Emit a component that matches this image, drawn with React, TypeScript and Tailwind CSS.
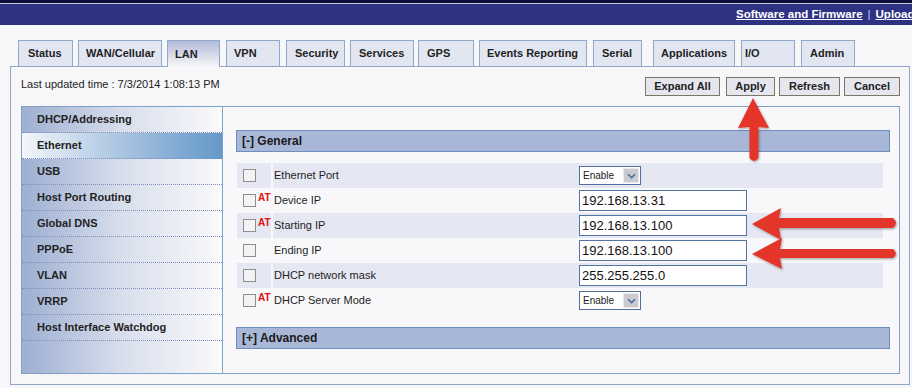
import React from 'react';

/* Router admin page: LAN > Ethernet settings */

const TABS = [
  { label: 'Status', cls: 'w-[55px] pl-[9px]' },
  { label: 'WAN/Cellular', cls: 'w-[84px] pl-[7px] ml-[5px]' },
  { label: 'LAN', cls: 'w-[53px] pl-[7px] ml-[5px]', active: true },
  { label: 'VPN', cls: 'w-[54px] pl-[7px] ml-[6px]' },
  { label: 'Security', cls: 'w-[59px] pl-[8px] ml-[6px]' },
  { label: 'Services', cls: 'w-[64px] pl-[8px] ml-[5px]' },
  { label: 'GPS', cls: 'w-[56px] pl-[8px] ml-[4px]' },
  { label: 'Events Reporting', cls: 'w-[108px] pl-[7px] ml-[5px]' },
  { label: 'Serial', cls: 'w-[49px] pl-[8px] ml-[6px]' },
  { label: 'Applications', cls: 'w-[82px] pl-[7px] ml-[11px]' },
  { label: 'I/O', cls: 'w-[54px] pl-[3px] ml-[6px]' },
  { label: 'Admin', cls: 'w-[54px] pl-[8px] ml-[6px]' },
];

const SIDE = [
  'DHCP/Addressing',
  'Ethernet',
  'USB',
  'Host Port Routing',
  'Global DNS',
  'PPPoE',
  'VLAN',
  'VRRP',
  'Host Interface Watchdog',
];

type Row = { label: string; at?: boolean; kind: 'select' | 'input'; value: string };

const ROWS: Row[] = [
  { label: 'Ethernet Port', kind: 'select', value: 'Enable' },
  { label: 'Device IP', at: true, kind: 'input', value: '192.168.13.31' },
  { label: 'Starting IP', at: true, kind: 'input', value: '192.168.13.100' },
  { label: 'Ending IP', kind: 'input', value: '192.168.13.100' },
  { label: 'DHCP network mask', kind: 'input', value: '255.255.255.0' },
  { label: 'DHCP Server Mode', at: true, kind: 'select', value: 'Enable' },
];

const BUTTONS = [
  { label: 'Expand All', cls: 'w-[75px]' },
  { label: 'Apply', cls: 'w-[49px] ml-[6px]' },
  { label: 'Refresh', cls: 'w-[61px] ml-[4px]' },
  { label: 'Cancel', cls: 'w-[56px] ml-[4px]' },
];

const Select: React.FC<{ value: string }> = ({ value }) => (
  <div className="w-[62px] h-[19px] border border-[#4f6f9c] bg-white flex items-center">
    <span className="flex-1 pl-[3px] text-[10px] text-[#222] leading-none">{value}</span>
    <span className="w-[16px] h-[15px] mr-[1px] bg-[#cacbd1] border border-[#e9e9ee] flex items-center justify-center">
      <svg width="9" height="6" viewBox="0 0 9 6">
        <path d="M1 1.2 L4.5 4.6 L8 1.2" fill="none" stroke="#4b6c9c" strokeWidth="1.6" />
      </svg>
    </span>
  </div>
);

const SettingRow: React.FC<{ row: Row; shaded: boolean }> = ({ row, shaded }) => {
  const bg = shaded ? 'bg-[#e5e7f2]' : '';
  return (
    <div className="flex h-[25px] gap-[2px]">
      <div className={`w-[34px] flex items-center pl-[6px] ${bg}`}>
        <span className="w-[13px] h-[13px] border border-[#8e8e8e] bg-[#f3f3f3] shrink-0" />
        {row.at && (
          <span className="ml-[2px] -mt-[5px] text-[10px] font-bold text-[#e01010] leading-none">AT</span>
        )}
      </div>
      <div className={`flex-1 flex items-center ${bg}`}>
        <span className="w-[306px] pl-[1px] text-[11px] text-[#1e1e1e]">{row.label}</span>
        {row.kind === 'select' ? (
          <Select value={row.value} />
        ) : (
          <div className="w-[168px] h-[21px] border border-[#5275a4] bg-white flex items-center pl-[2px] text-[13px] text-[#111] leading-none">
            {row.value}
          </div>
        )}
      </div>
    </div>
  );
};

const SectionBar: React.FC<{ label: string }> = ({ label }) => (
  <div className="h-[22px] border border-[#6e8ebd] bg-[#a8b7d7] flex items-center pl-[5px] text-[12px] font-bold text-[#1a1a1a]">
    {label}
  </div>
);

const Arrows = () => (
  <svg className="absolute left-0 top-0 pointer-events-none" width="912" height="388" viewBox="0 0 912 388">
    <defs>
      <filter id="sh" x="-20%" y="-20%" width="140%" height="140%">
        <feDropShadow dx="0.8" dy="1.2" stdDeviation="0.8" floodColor="#000" floodOpacity="0.35" />
      </filter>
    </defs>
    <g fill="#e3342b" filter="url(#sh)">
      <path d="M753 98 L769 128 L758.5 127 L758.5 158 Q754 164 749.5 158 L749.5 127 L738 128 Z" />
      <path d="M752 224 L781 208 L779 218 L893 218 Q899 223 893 228 L779 228 L781 240 Z" />
      <path d="M752 254 L782 238 L780 249 L893 249 Q899 253.5 893 258 L780 258 L782 269 Z" />
    </g>
  </svg>
);

export default function App() {
  return (
    <div className="relative w-[912px] h-[388px] overflow-hidden bg-[#f7f7f9] font-['Liberation_Sans',Arial,sans-serif]">
      {/* Header bar */}
      <div className="h-[3px] bg-[#0a0e3a]" />
      <div className="h-[1px] bg-[#c4cbe3]" />
      <div className="h-[21px] bg-[#2e3283] flex items-center pl-[736px] whitespace-nowrap text-[11.5px] font-bold text-white">
        <span className="underline">Software and Firmware</span>
        <span className="mx-[5px] text-[#c9cbe6] font-normal">|</span>
        <span className="underline">Upload</span>
      </div>

      {/* Tabs */}
      <div className="mt-[15px] pl-[18px] flex items-end h-[26px]">
        {TABS.map(t => (
          <div
            key={t.label}
            className={`${t.cls} flex items-center border border-b-0 border-[#8ea9ca] text-[11px] font-bold text-[#222] ${
              t.active
                ? 'h-[27px] -mb-px relative z-10 bg-gradient-to-b from-[#b2bbd8] to-[#f7f7f9]'
                : 'h-[26px] bg-[#e2e6f1]'
            }`}
          >
            {t.label}
          </div>
        ))}
      </div>

      {/* Main panel */}
      <div className="ml-[10px] w-[900px] h-[319px] border border-[#8ea9ca] bg-[#f7f7f9]">
        <div className="flex items-start justify-between pt-[10px] pl-[10px] pr-[9px]">
          <span className="text-[11px] leading-[15px] text-[#222]">Last updated time : 7/3/2014 1:08:13 PM</span>
          <div className="flex">
            {BUTTONS.map(b => (
              <div
                key={b.label}
                className={`${b.cls} h-[19px] border border-[#78776a] bg-[#e5e6ee] flex items-center justify-center text-[11px] font-bold text-[#222]`}
              >
                {b.label}
              </div>
            ))}
          </div>
        </div>

        <div className="mt-[10px] ml-[10px] mr-[9px] h-[268px] border border-[#7fa1c6] flex">
          {/* Sidebar */}
          <div className="w-[201px] border-r border-[#7fa1c6] bg-gradient-to-r from-[#9eafd2] via-[#d8deec] to-[#fafafc]">
            {SIDE.map(s => (
              <div
                key={s}
                className={`h-[26px] flex items-center pl-[15px] border-b border-dotted border-[#7d90bb] text-[11px] font-bold text-[#222] ${
                  s === 'Ethernet' ? 'bg-gradient-to-r from-[#f3f6fa] via-[#a9c4e0] to-[#6498c9]' : ''
                }`}
              >
                {s}
              </div>
            ))}
          </div>

          {/* Content */}
          <div className="flex-1 pl-[13px] pr-[9px] pt-[23px] bg-[#f8f8fa]">
            <SectionBar label="[-] General" />
            <div className="mt-[11px] ml-[1px] w-[646px]">
              {ROWS.map((r, i) => (
                <SettingRow key={r.label} row={r} shaded={i % 2 === 0} />
              ))}
            </div>
            <div className="mt-[14px]">
              <SectionBar label="[+] Advanced" />
            </div>
          </div>
        </div>
      </div>

      <Arrows />
    </div>
  );
}
